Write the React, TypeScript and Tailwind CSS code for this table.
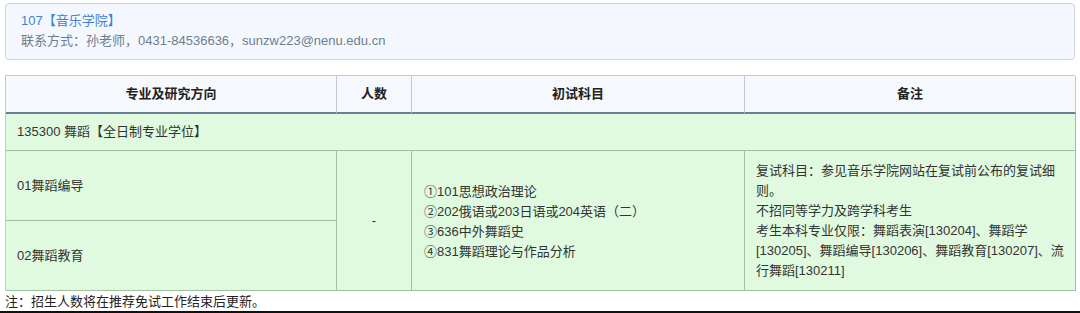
import React from "react";

const font = {
  fontFamily: '"Liberation Sans", "Noto Sans CJK SC", sans-serif',
};

const subjects = [
  "①101思想政治理论",
  "②202俄语或203日语或204英语（二）",
  "③636中外舞蹈史",
  "④831舞蹈理论与作品分析",
];

// Remark text laid out line by line, as the cell wraps it
const remarkLines = [
  "复试科目：参见音乐学院网站在复试前公布的复试细",
  "则。",
  "不招同等学力及跨学科考生",
  "考生本科专业仅限：舞蹈表演[130204]、舞蹈学",
  "[130205]、舞蹈编导[130206]、舞蹈教育[130207]、流",
  "行舞蹈[130211]",
];

export default function App() {
  return (
    <div
      className="relative w-[1080px] h-[313px] overflow-hidden bg-white text-[13px] text-[#333]"
      style={font}
    >
      {/* College contact card */}
      <div className="mx-[5px] mt-[3px] h-[57px] rounded-[4px] border border-[#cdd6e2] bg-[#f4f8fe] px-[15px] pt-[7px] leading-[20px]">
        <div className="text-[#3d82d3]">107【音乐学院】</div>
        <div className="text-[#6f7d8f]">
          联系方式：孙老师，0431-84536636，sunzw223@nenu.edu.cn
        </div>
      </div>

      {/* Program table */}
      <div className="mx-[5px] mt-[15px] grid w-[1070px] grid-cols-[331px_75px_333px_331px] border-l border-t border-[#c4cad2]">
        {/* Header */}
        {["专业及研究方向", "人数", "初试科目", "备注"].map((h) => (
          <div
            key={h}
            className="flex h-[38px] items-center justify-center border-b-2 border-r border-b-[#6c7e93] border-r-[#c4cad2] bg-[#f5f8fd] font-bold text-[#222]"
          >
            {h}
          </div>
        ))}

        {/* Program row */}
        <div className="col-span-4 flex h-[37px] items-center border-b border-r border-[#9fc09f] bg-[#e0fadf] px-[11px]">
          135300 舞蹈【全日制专业学位】
        </div>

        {/* Directions + merged cells */}
        <div className="col-start-1 row-start-3 flex h-[70px] items-center border-b border-r border-[#9fc09f] bg-[#e0fadf] px-[11px]">
          01舞蹈编导
        </div>
        <div className="col-start-1 row-start-4 flex h-[70px] items-center border-b border-r border-[#9fc09f] bg-[#e0fadf] px-[11px]">
          02舞蹈教育
        </div>
        <div className="col-start-2 row-span-2 row-start-3 flex items-center justify-center border-b border-r border-[#9fc09f] bg-[#e0fadf]">
          -
        </div>
        <div className="col-start-3 row-span-2 row-start-3 flex flex-col justify-center border-b border-r border-[#9fc09f] bg-[#e0fadf] px-[12px] pt-[2px] leading-[20px]">
          {subjects.map((s) => (
            <div key={s}>{s}</div>
          ))}
        </div>
        <div className="col-start-4 row-span-2 row-start-3 flex flex-col justify-center border-b border-r border-[#9fc09f] bg-[#e0fadf] px-[11px] leading-[20px]">
          {remarkLines.map((r) => (
            <div key={r} className="whitespace-nowrap">
              {r}
            </div>
          ))}
        </div>
      </div>

      <div className="mt-[2px] px-[5px] leading-[18px] text-[#222]">
        注：招生人数将在推荐免试工作结束后更新。
      </div>

      <div className="absolute bottom-0 left-0 h-[2px] w-full bg-[#111]" />
    </div>
  );
}
